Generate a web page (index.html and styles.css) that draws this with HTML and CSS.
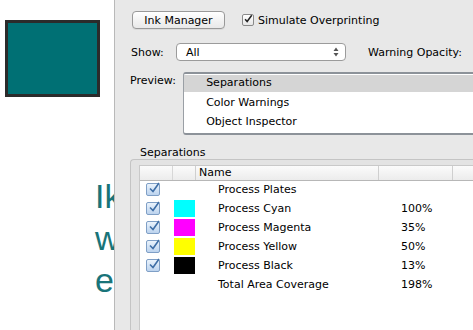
FILE: index.html
```html
<!DOCTYPE html>
<html>
<head>
<meta charset="utf-8">
<link rel="stylesheet" href="styles.css">
</head>
<body>
<div class="page">
  <div class="canvas">
    <div class="swatch-big"></div>
    <div class="bigtext">Ik<br>w<br>e</div>
  </div>
  <div class="panel">
    <div class="row row-top">
      <button class="btn">Ink Manager</button>
      <span class="check"><svg viewBox="0 0 12 12" width="12" height="12"><path d="M2.5 6.2 L5 9 L10.5 1.5" fill="none" stroke="#222" stroke-width="1.8"/></svg></span>
      <span class="lbl">Simulate Overprinting</span>
    </div>
    <div class="row row-show">
      <span class="lbl show-lbl">Show:</span>
      <div class="select"><span>All</span><svg class="arrows" viewBox="0 0 6 10" width="6" height="10"><path d="M3 0.5 L5.5 4 H0.5Z M3 9.5 L5.5 6 H0.5Z" fill="#555"/></svg></div>
      <span class="lbl warn">Warning Opacity:</span>
    </div>
    <div class="row row-preview">
      <span class="lbl prev-lbl">Preview:</span>
      <div class="listbox">
        <div class="li sel">Separations</div>
        <div class="li">Color Warnings</div>
        <div class="li">Object Inspector</div>
      </div>
    </div>
    <div class="group-title">Separations</div>
    <div class="group">
      <div class="table">
        <div class="thead">
          <div class="c c1"></div>
          <div class="c c2"></div>
          <div class="c c3">Name</div>
          <div class="c c4"></div>
          <div class="c c5"></div>
        </div>
        <div class="tr">
          <div class="c c1"><span class="cb"><svg viewBox="0 0 14 14" width="14" height="14"><path d="M3 7.5 L6 10.5 L12 2" fill="none" stroke="#3e6ea6" stroke-width="1.6"/></svg></span></div>
          <div class="c c2"></div>
          <div class="c c3 nm">Process Plates</div>
          <div class="c c4"></div>
        </div>
        <div class="tr">
          <div class="c c1"><span class="cb"><svg viewBox="0 0 14 14" width="14" height="14"><path d="M3 7.5 L6 10.5 L12 2" fill="none" stroke="#3e6ea6" stroke-width="1.6"/></svg></span></div>
          <div class="c c2"><span class="sw cyan"></span></div>
          <div class="c c3 nm">Process Cyan</div>
          <div class="c c4">100%</div>
        </div>
        <div class="tr">
          <div class="c c1"><span class="cb"><svg viewBox="0 0 14 14" width="14" height="14"><path d="M3 7.5 L6 10.5 L12 2" fill="none" stroke="#3e6ea6" stroke-width="1.6"/></svg></span></div>
          <div class="c c2"><span class="sw magenta"></span></div>
          <div class="c c3 nm">Process Magenta</div>
          <div class="c c4">35%</div>
        </div>
        <div class="tr">
          <div class="c c1"><span class="cb"><svg viewBox="0 0 14 14" width="14" height="14"><path d="M3 7.5 L6 10.5 L12 2" fill="none" stroke="#3e6ea6" stroke-width="1.6"/></svg></span></div>
          <div class="c c2"><span class="sw yellow"></span></div>
          <div class="c c3 nm">Process Yellow</div>
          <div class="c c4">50%</div>
        </div>
        <div class="tr">
          <div class="c c1"><span class="cb"><svg viewBox="0 0 14 14" width="14" height="14"><path d="M3 7.5 L6 10.5 L12 2" fill="none" stroke="#3e6ea6" stroke-width="1.6"/></svg></span></div>
          <div class="c c2"><span class="sw black"></span></div>
          <div class="c c3 nm">Process Black</div>
          <div class="c c4">13%</div>
        </div>
        <div class="tr">
          <div class="c c1"></div>
          <div class="c c2"></div>
          <div class="c c3 nm">Total Area Coverage</div>
          <div class="c c4">198%</div>
        </div>
      </div>
    </div>
  </div>
</div>
</body>
</html>
```
FILE: styles.css
```css
* { box-sizing: border-box; }
html, body { margin: 0; padding: 0; }
body {
  width: 473px; height: 330px; overflow: hidden; background: #fff;
  font-family: "DejaVu Sans", "Lucida Grande", sans-serif; font-size: 11px; color: #000;
}
.page { display: flex; width: 473px; height: 330px; }
.canvas {
  width: 114px; flex: none; overflow: hidden; position: relative; background: #fff;
  padding: 20px 0 0 5px;
}
.swatch-big {
  width: 95px; height: 77px; background: #007074; border: 3px solid #2b2b2b;
}
.bigtext {
  margin: 78px 0 0 90px; font-family: "Liberation Sans", Arial, sans-serif;
  font-size: 34px; line-height: 42px; color: #197479; white-space: nowrap;
}
.panel {
  flex: none; width: 359px; height: 330px; background: #e8e8e8;
  border-left: 1px solid #b9b9b9; padding-left: 15px; overflow: hidden;
}
.row { display: flex; align-items: center; white-space: nowrap; }
.row-top { margin-top: 11px; height: 18px; }
.btn {
  font: inherit; font-size: 11px; width: 93px; height: 18px; padding: 0;
  margin-left: 2px;
  border: 1px solid #999; border-radius: 4px;
  background: linear-gradient(#ffffff, #f1f1f1 60%, #e9e9e9);
  box-shadow: 0 1px 0 rgba(0,0,0,0.06);
}
.check {
  margin-left: 17px; width: 12px; height: 12px; border: 1px solid #8a8a8a; border-radius: 2px;
  background: linear-gradient(#fff, #e6e6e6); display: flex; align-items: center; justify-content: center;
}
.check svg { margin-top: -2px; }
.row-top .lbl { margin-left: 4px; }
.row-show { margin-top: 14px; height: 18px; }
.show-lbl { margin-left: 1px; width: 45px; }
.select {
  width: 170px; height: 18px; border: 1px solid #9b9b9b; border-radius: 4px; background: #fff;
  display: flex; align-items: center; justify-content: space-between; padding: 0 6px 0 9px;
}
.warn { margin-left: 22px; }
.row-preview { margin-top: 11px; align-items: flex-start; }
.prev-lbl { margin-left: 0; width: 55px; margin-top: 2px; }
.listbox {
  width: 300px; height: 63px; background: #fff; border: 1px solid #9a9fa5;
  border-top: 2px solid #8c9299; border-bottom: 2px solid #8c9299; border-right: none;
  border-radius: 3px 0 0 3px; padding-top: 1px;
}
.li { height: 19px; line-height: 19px; padding-left: 22px; }
.li.sel { background: #d5d5d5; height: 17px; line-height: 16px; margin-bottom: 1px; }
.group-title { margin: 11px 0 0 10px; height: 14px; line-height: 14px; }
.group {
  margin-top: -1px; height: 200px; border: 1px solid #c4c4c4; border-radius: 4px 0 0 0;
  border-right: none; background: #e3e3e3; padding: 5px 0 0 8px;
}
.table { background: #fff; height: 200px; border-left: 1px solid #c9c9c9; border-top: 1px solid #c9c9c9; }
.thead {
  display: flex; height: 15px; background: linear-gradient(#fbfbfb, #ececec);
  border-bottom: 1px solid #b7b7b7;
}
.thead .c { border-right: 1px solid #cfcfcf; line-height: 14px; height: 14px; }
.thead .c1 { border-right-color: #d7d7d7; }
.thead .c3 { padding-left: 3px; }
.c1 { width: 33px; flex: none; }
.c2 { width: 23px; flex: none; }
.c3 { width: 183px; flex: none; }
.c4 { width: 74px; flex: none; }
.c5 { width: 40px; flex: none; border-right: none !important; }
.tr { display: flex; height: 19px; align-items: center; }
.thead + .tr { margin-top: -1px; }
.tr .c1 { display: flex; justify-content: flex-start; padding-left: 6px; }
.tr .c2 { display: flex; }
.nm { padding-left: 22px; }
.tr .c4 { padding-left: 22px; }
.cb {
  width: 14px; height: 13px; border: 1px solid #7f9fc6; border-radius: 2px;
  background: linear-gradient(#eaf3fc, #bcd3ee); position: relative; display: block;
}
.cb svg { position: absolute; left: 0; top: -3px; }
.sw { width: 21px; height: 17px; display: block; margin-left: 1px; }
.cyan { background: #00ffff; }
.magenta { background: #ff00ff; }
.yellow { background: #ffff00; }
.black { background: #000; }
```
